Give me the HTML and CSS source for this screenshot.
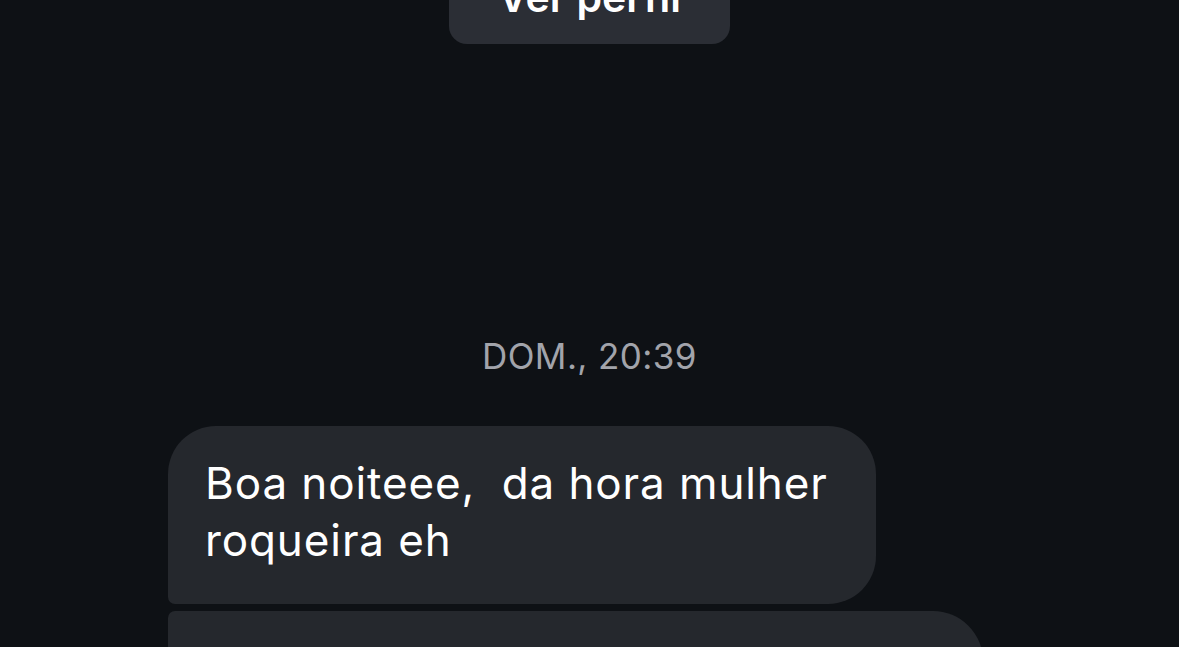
FILE: index.html
```html
<!DOCTYPE html>
<html>
    <head>
        <meta charset="utf-8">
        <title>Conversa</title>
        <link rel="stylesheet" href="styles.css">
    </head>
    <body>
        <div class="chat">
            <div class="profile">
                <button class="profile-btn" type="button">Ver perfil</button>
            </div>
            <div class="stamp">DOM., 20:39</div>
            <div class="messages">
                <div class="bubble first">Boa noiteee,&nbsp; da hora mulher<br>roqueira eh</div>
                <div class="bubble next"></div>
            </div>
        </div>
    </body>
</html>
```

FILE: styles.css
```css
body{
    margin: 0;
    background: #0e1115;
    font-family: Inter, "Noto Sans", sans-serif;
    color: #ffffff;
    overflow: hidden;
}

.chat{
    display: flex;
    flex-direction: column;
    height: 647px;
    overflow: hidden;
}

.profile{
    display: flex;
    justify-content: center;
}

.profile-btn{
    margin-top: -43px;
    width: 281px;
    border: none;
    border-radius: 18px;
    background: #2b2e35;
    color: #ffffff;
    font-family: Inter, "Noto Sans", sans-serif;
    font-size: 41px;
    font-weight: 600;
    line-height: 40px;
    padding: 20px 0 27px;
}

.stamp{
    margin-top: 291px;
    text-align: center;
    color: #a2a4ab;
    font-size: 35px;
    line-height: 42px;
    letter-spacing: 0.4px;
}

.messages{
    display: flex;
    flex-direction: column;
    gap: 7px;
    padding-left: 168px;
    margin-top: 49px;
}

.bubble{
    background: #25282d;
    font-size: 44px;
    line-height: 57px;
    letter-spacing: 0.9px;
}

.first{
    width: 708px;
    box-sizing: border-box;
    padding: 29px 20px 35px 37px;
    border-radius: 48px 48px 48px 7px;
}

.next{
    width: 815px;
    height: 120px;
    border-radius: 7px 50px 50px 7px;
}
```
